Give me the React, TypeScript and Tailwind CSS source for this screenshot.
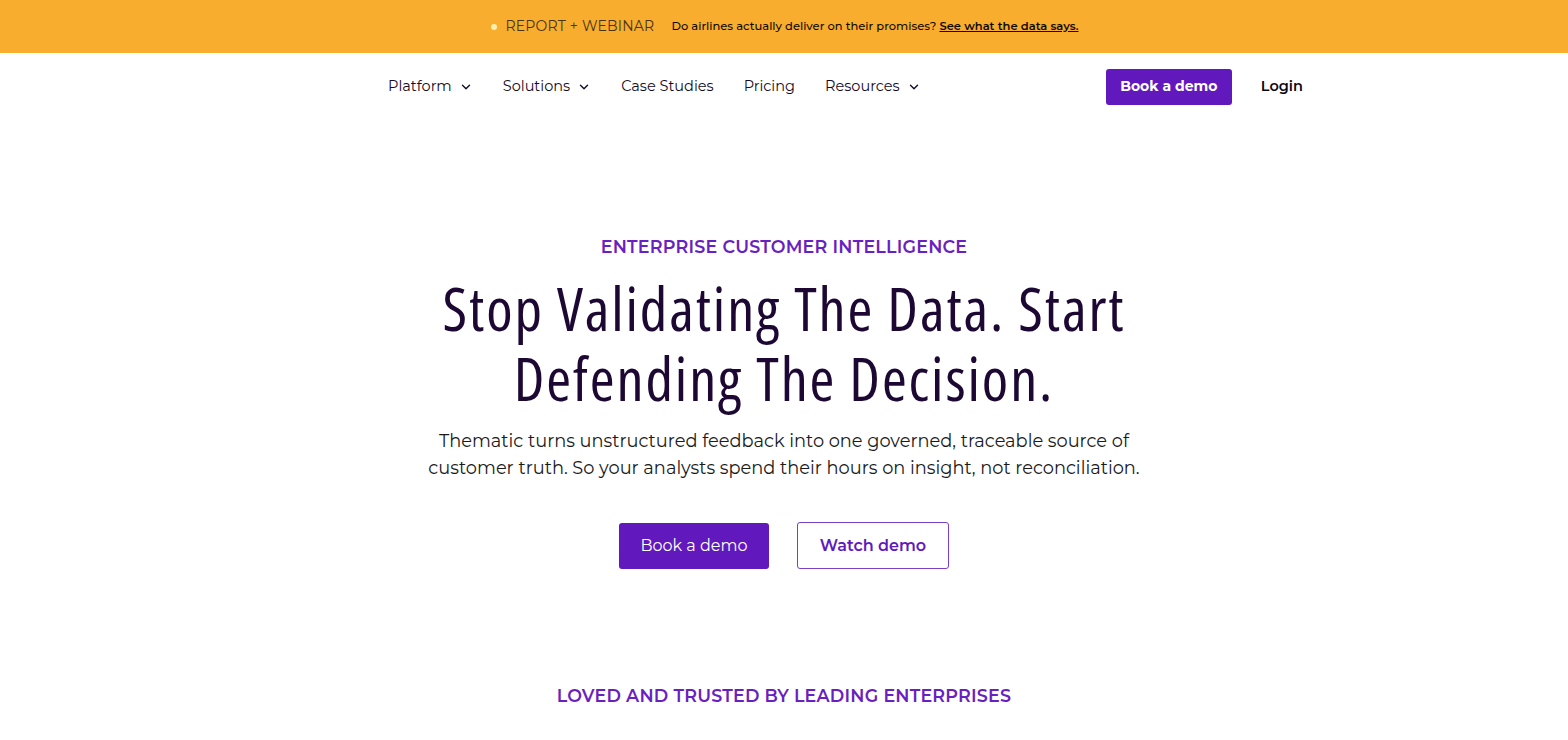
import { ChevronDown } from "lucide-react";

const sans = "font-['Montserrat','Noto_Sans','Open_Sans',sans-serif]";

const NavItem = ({ label, menu }: { label: string; menu?: boolean }) => (
  <div className="flex items-center gap-[7px] text-[14.5px] text-[#160a22]">
    <span>{label}</span>
    {menu && <ChevronDown size={14} strokeWidth={2.4} />}
  </div>
);

export default function App() {
  return (
    <div className={`min-h-screen bg-white ${sans}`}>
      {/* promo strip */}
      <div className="h-[53px] bg-[#f9ad2e] flex items-center justify-center gap-[17px] pl-[2px]">
        <div className="flex items-center gap-[8px]">
          <span className="w-[6px] h-[6px] rounded-full bg-[#fff0b0]" />
          <span className="text-[14px] text-[#4a3414] tracking-[0.2px]">REPORT + WEBINAR</span>
        </div>
        <div className="text-[11.5px] font-medium text-[#120a02]">
          Do airlines actually deliver on their promises?{" "}
          <a className="underline font-semibold">See what the data says.</a>
        </div>
      </div>

      {/* header nav */}
      <header className="h-[67px] flex items-center pl-[388px] pr-[265px]">
        <nav className="flex items-center gap-[30px]">
          <NavItem label="Platform" menu />
          <NavItem label="Solutions" menu />
          <NavItem label="Case Studies" />
          <NavItem label="Pricing" />
          <NavItem label="Resources" menu />
        </nav>
        <div className="ml-auto flex items-center gap-[29px]">
          <button className="h-[36px] w-[126px] rounded-[3px] bg-[#6119be] text-white text-[14px] font-bold">
            Book a demo
          </button>
          <span className="text-[14.5px] font-semibold text-[#0c0614]">Login</span>
        </div>
      </header>

      {/* hero */}
      <section className="flex flex-col items-center text-center pt-[114px]">
        <p className="text-[17.5px] font-semibold text-[#6a1fc0] tracking-[0.2px]">ENTERPRISE CUSTOMER INTELLIGENCE</p>
        <h1 className="mt-[13px] font-['Open_Sans',sans-serif] [font-stretch:75%] text-[60px] leading-[70px] font-medium text-[#1c0833] tracking-[1.9px]">
          Stop Validating The Data. Start
          <br />
          Defending The Decision.
        </h1>
        <p className="mt-[14px] text-[17.8px] leading-[27px] text-[#1a1a1a] max-w-[740px]">
          Thematic turns unstructured feedback into one governed, traceable source of
          <br />
          customer truth. So your analysts spend their hours on insight, not reconciliation.
        </p>
        <div className="mt-[41px] flex items-center gap-[28px]">
          <button className="h-[46px] w-[150px] rounded-[3px] bg-[#6119be] text-white text-[16px]">
            Book a demo
          </button>
          <button className="h-[47px] w-[152px] rounded-[3px] border border-[#7b3fc8] text-[#6119be] text-[16px] font-semibold">
            Watch demo
          </button>
        </div>
        <p className="mt-[114px] text-[17.5px] font-semibold text-[#6a1fc0] tracking-[0.2px]">
          LOVED AND TRUSTED BY LEADING ENTERPRISES
        </p>
      </section>
    </div>
  );
}
